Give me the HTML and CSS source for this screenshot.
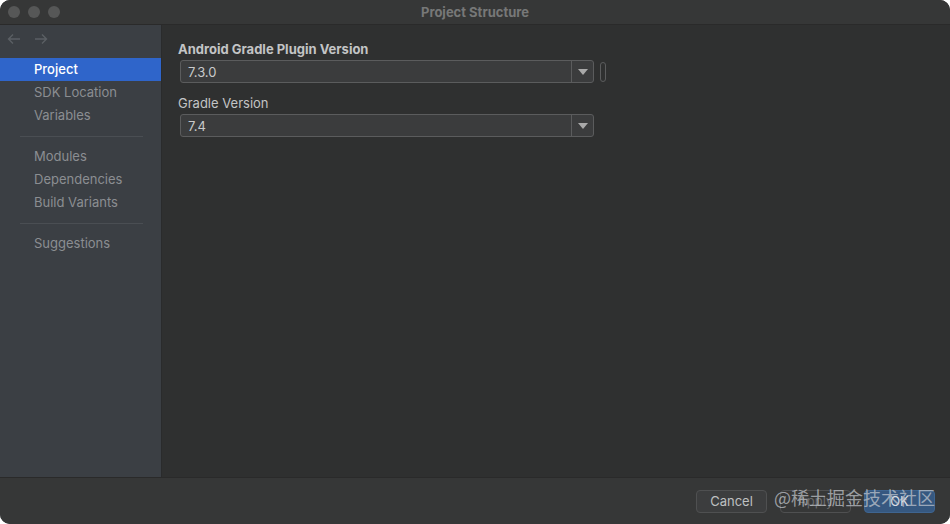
FILE: index.html
```html
<!DOCTYPE html>
<html lang="en">
<head>
  <meta charset="UTF-8" />
  <title>Project Structure</title>
  <link rel="stylesheet" href="styles.css">
</head>
<body>
  <div class="window">
    <!-- Title bar -->
    <div class="titlebar">
      <div class="lights">
        <span class="light"></span>
        <span class="light"></span>
        <span class="light"></span>
      </div>
      <div class="title">Project Structure</div>
    </div>

    <div class="main">
      <!-- Sidebar -->
      <div class="sidebar">
        <div class="nav-arrows">
          <svg width="14" height="12" viewBox="0 0 14 12"><path d="M13 6H2M6 1.5L1.5 6 6 10.5" fill="none" stroke="#5b5f64" stroke-width="1.4"/></svg>
          <svg width="14" height="12" viewBox="0 0 14 12"><path d="M1 6h11M8 1.5L12.5 6 8 10.5" fill="none" stroke="#5b5f64" stroke-width="1.4"/></svg>
        </div>
        <div class="item selected">Project</div>
        <div class="item">SDK Location</div>
        <div class="item">Variables</div>
        <div class="sep"></div>
        <div class="item">Modules</div>
        <div class="item">Dependencies</div>
        <div class="item">Build Variants</div>
        <div class="sep"></div>
        <div class="item">Suggestions</div>
      </div>

      <!-- Content -->
      <div class="content">
        <div class="field">
          <div class="label bold">Android Gradle Plugin Version</div>
          <div class="row">
            <div class="combo">
              <span class="value">7.3.0</span>
              <span class="arrow"><svg width="10" height="6" viewBox="0 0 10 6"><path d="M0 0h10L5 6z" fill="#a9a9a9"/></svg></span>
            </div>
            <span class="pill"></span>
          </div>
        </div>
        <div class="field">
          <div class="label">Gradle Version</div>
          <div class="row">
            <div class="combo">
              <span class="value">7.4</span>
              <span class="arrow"><svg width="10" height="6" viewBox="0 0 10 6"><path d="M0 0h10L5 6z" fill="#a9a9a9"/></svg></span>
            </div>
          </div>
        </div>
      </div>
    </div>

    <!-- Bottom buttons -->
    <div class="footer">
      <button class="btn">Cancel</button>
      <button class="btn disabled">Apply</button>
      <button class="btn primary">OK</button>
      <span class="watermark">@稀土掘金技术社区</span>
    </div>
  </div>
</body>
</html>
```

FILE: styles.css
```css
html, body {
  margin: 0;
  padding: 0;
  background: #fff;
}

body {
  font-family: Inter, "Noto Sans", sans-serif;
  font-size: 13px;
}

.window {
  width: 950px;
  height: 524px;
  background: #2f3030;
  border-radius: 10px;
  overflow: hidden;
  display: flex;
  flex-direction: column;
  position: relative;
}

.titlebar {
  height: 24px;
  background: #363737;
  border-bottom: 1px solid #2a2a2a;
  display: flex;
  align-items: center;
  position: relative;
  flex-shrink: 0;
}
.lights {
  display: flex;
  gap: 8px;
  padding-left: 8px;
}
.light {
  width: 12px;
  height: 12px;
  border-radius: 50%;
  background: #565757;
}
.title {
  position: absolute;
  left: 0;
  right: 0;
  text-align: center;
  color: #777878;
  font-weight: 700;
  font-size: 13px;
}

.main {
  flex: 1;
  display: flex;
  min-height: 0;
}

.sidebar {
  width: 161px;
  background: #3b3f44;
  border-right: 1px solid #2a2b2c;
  flex-shrink: 0;
}
.nav-arrows {
  display: flex;
  gap: 13px;
  padding: 8px 0 0 7px;
  height: 33px;
  box-sizing: border-box;
}
.item {
  height: 23px;
  line-height: 23px;
  padding-left: 34px;
  color: #8b8e92;
  font-size: 13px;
}
.item.selected {
  background: #2f65ca;
  color: #fff;
  font-weight: 500;
}
.sep {
  height: 1px;
  background: #4a4e53;
  margin: 9px 18px 8px 20px;
}

.content {
  flex: 1;
  padding: 16px 0 0 16px;
}
.field {
  margin-bottom: 12px;
}
.label {
  color: #c3c4c5;
  font-size: 13px;
  height: 18px;
}
.label.bold {
  font-weight: 700;
}
.row {
  display: flex;
  align-items: center;
  margin-left: 2px;
  margin-top: 1px;
}
.combo {
  width: 412px;
  height: 21px;
  border: 1px solid #5b5c5d;
  border-radius: 3px;
  background: #3b3c3d;
  display: flex;
  align-items: center;
}
.value {
  flex: 1;
  padding-left: 7px;
  color: #c9cacb;
  font-size: 13px;
}
.arrow {
  width: 21px;
  height: 21px;
  border-left: 1px solid #5b5c5d;
  display: flex;
  align-items: center;
  justify-content: center;
}
.pill {
  width: 4px;
  height: 18px;
  border: 1px solid #5b5c5d;
  border-radius: 3px;
  margin-left: 6px;
}

.footer {
  height: 46px;
  background: #363737;
  border-top: 1px solid #2a2a2a;
  display: flex;
  align-items: center;
  justify-content: flex-end;
  gap: 13px;
  padding-right: 15px;
  flex-shrink: 0;
  position: relative;
}
.btn {
  width: 71px;
  height: 23px;
  border-radius: 4px;
  border: 1px solid #4f5051;
  background: #3c3d3e;
  color: #bfc0c1;
  font-family: Inter, "Noto Sans", sans-serif;
  font-size: 13px;
  padding: 0;
}
.btn.disabled {
  background: transparent;
  color: #6b6c6d;
}
.btn.primary {
  background: #365880;
  border-color: #3f6590;
  color: #d8dde3;
}
.watermark {
  position: absolute;
  right: 15px;
  top: 6px;
  font-family: "Noto Sans CJK SC", "Noto Sans", sans-serif;
  font-size: 18px;
  color: rgba(200, 204, 210, 0.7);
  pointer-events: none;
}
```
